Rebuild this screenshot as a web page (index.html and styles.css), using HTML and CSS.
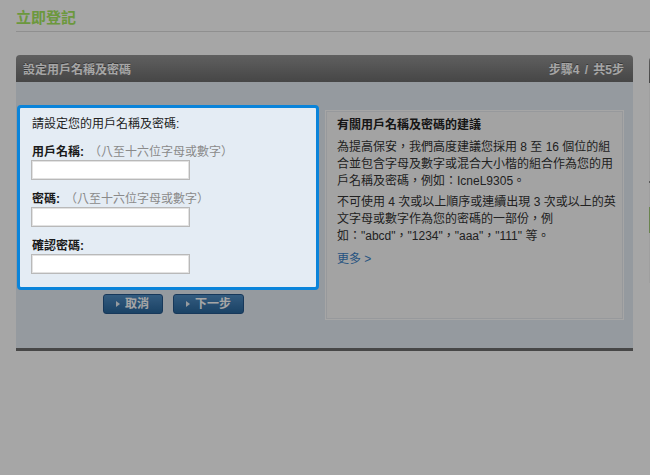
FILE: index.html
```html
<!DOCTYPE html>
<html lang="zh-Hant">
<head>
<meta charset="utf-8">
<title>立即登記</title>
<link rel="stylesheet" href="styles.css">
</head>
<body>
<div class="page">
  <header class="page-head"><h1>立即登記</h1></header>
  <div class="layout">
    <section class="panel">
      <div class="panel-head">
        <span class="panel-title">設定用戶名稱及密碼</span>
        <span class="panel-step">步驟4 / 共5步</span>
      </div>
      <div class="panel-body">
        <div class="form-col">
          <form class="form-box">
            <p class="intro">請設定您的用戶名稱及密碼:</p>
            <label class="field-label">用戶名稱:<span class="hint">（八至十六位字母或數字）</span></label>
            <input class="field" type="text">
            <label class="field-label">密碼:<span class="hint">（八至十六位字母或數字）</span></label>
            <input class="field" type="password">
            <label class="field-label">確認密碼:</label>
            <input class="field" type="password">
          </form>
          <div class="actions">
            <button class="btn btn-cancel" type="button"><span class="arrow"></span>取消</button>
            <button class="btn btn-next" type="button"><span class="arrow"></span>下一步</button>
          </div>
        </div>
        <aside class="tips">
          <h2>有關用戶名稱及密碼的建議</h2>
          <p>為提高保安，我們高度建議您採用 8 至 16 個位的組合並包含字母及數字或混合大小楷的組合作為您的用戶名稱及密碼，例如：IcneL9305。</p>
          <p>不可使用 4 次或以上順序或連續出現 3 次或以上的英文字母或數字作為您的密碼的一部份，例如："abcd"，"1234"，"aaa"，"111" 等。</p>
          <a class="more" href="#">更多 &gt;</a>
        </aside>
      </div>
    </section>
    <aside class="side">
      <div class="side-head"></div>
      <div class="side-body">
        <div class="side-rule"></div>
        <div class="side-green"></div>
      </div>
    </aside>
  </div>
</div>
<div class="overlay"></div>
</body>
</html>
```
FILE: styles.css
```css
html, body {
  margin: 0;
  padding: 0;
  background: #ffffff;
}
body {
  width: 650px;
  height: 475px;
  overflow: hidden;
  font-family: "Liberation Sans", "Noto Sans CJK TC", sans-serif;
  font-size: 12px;
  color: #222;
}
.page {
  box-sizing: border-box;
  width: 650px;
  height: 475px;
  overflow: hidden;
  padding-left: 16px;
}
.page-head {
  padding-top: 8px;
  padding-bottom: 3px;
  border-bottom: 1px solid #dcdcdc;
}
.page-head h1 {
  margin: 0;
  font-size: 15px;
  line-height: 20px;
  font-weight: bold;
  color: #a6ea5e;
}
.layout {
  display: flex;
  gap: 16px;
  margin-top: 23px;
}
.panel {
  width: 617px;
  flex-shrink: 0;
}
.panel-head {
  height: 27px;
  display: flex;
  align-items: center;
  justify-content: space-between;
  padding: 0 9px 0 7px;
  border-radius: 4px 4px 0 0;
  background: linear-gradient(#939393, #6c6c6c);
  color: #ffffff;
  font-weight: bold;
  font-size: 12px;
  text-shadow: 0 -1px 0 #555;
}
.panel-step {
  word-spacing: 2px;
}
.panel-body {
  display: flex;
  align-items: flex-start;
  gap: 6px;
  padding: 23px 9px 28px 1px;
  background: #e5edf5;
  border-bottom: 3px solid #6e6e6e;
}
.form-col {
  width: 302px;
  flex-shrink: 0;
}
.form-box {
  position: relative;
  z-index: 10;
  margin: 0;
  box-sizing: border-box;
  height: 185px;
  padding: 8px 12px 0 12px;
  background: #e4ecf4;
  border: 3px solid #0a84da;
  border-radius: 4px;
  display: flex;
  flex-direction: column;
  align-items: flex-start;
}
.intro {
  margin: 0 0 12px 0;
  line-height: 16px;
  color: #222;
}
.field-label {
  display: block;
  line-height: 16px;
  font-weight: bold;
  color: #1a1a1a;
}
.hint {
  margin-left: 5px;
  font-weight: normal;
  color: #8a8a8a;
}
.field {
  box-sizing: border-box;
  width: 159px;
  height: 20px;
  margin: 0 0 11px -1px;
  padding: 0 3px;
  border: 1px solid #b9b9b9;
  box-shadow: inset 0 0 0 1px #e2e2e2;
  background: #fff;
  font: inherit;
}
.field:last-child {
  margin-bottom: 0;
}
.actions {
  display: flex;
  gap: 10px;
  margin-top: 4px;
  padding-left: 86px;
}
.btn {
  display: flex;
  align-items: center;
  height: 20px;
  box-sizing: border-box;
  padding: 0 13px 0 12px;
  border: 1px solid #24568a;
  border-radius: 3px;
  background: linear-gradient(#4f8dc4, #29669c);
  color: #ffffff;
  font: bold 12px "Liberation Sans", "Noto Sans CJK TC", sans-serif;
  line-height: 18px;
  cursor: pointer;
}
.btn-next {
  padding-right: 12px;
}
.arrow {
  width: 0;
  height: 0;
  border-left: 4px solid #e8eef4;
  border-top: 3px solid transparent;
  border-bottom: 3px solid transparent;
  margin-right: 5px;
}
.tips {
  box-sizing: border-box;
  width: 299px;
  height: 210px;
  margin-top: 5px;
  padding: 6px 6px 0 11px;
  background: #fbfbfb;
  border: 1px solid #ffffff;
  outline: 1px solid #e8ecf0;
  outline-offset: -2px;
  color: #333333;
  line-height: 17px;
}
.tips h2 {
  margin: 0 0 5px 0;
  font-size: 12px;
  line-height: 17px;
  font-weight: bold;
  color: #222222;
}
.tips p {
  margin: 0 0 4px 0;
}
.more {
  display: inline-block;
  margin-top: 2px;
  color: #3a82c6;
  text-decoration: none;
}
.side {
  width: 200px;
  flex-shrink: 0;
}
.side-head {
  height: 26px;
  margin-top: 2px;
  border-radius: 4px 4px 0 0;
  background: linear-gradient(#939393, #6c6c6c);
}
.side-body {
  height: 200px;
  background: #f4f4f4;
  padding-top: 98px;
  box-sizing: border-box;
}
.side-rule {
  height: 2px;
  background: #8a8a8a;
}
.side-green {
  margin-top: 24px;
  height: 26px;
  background: #a3c97a;
}
.overlay {
  position: fixed;
  inset: 0;
  z-index: 5;
  background: rgba(0, 0, 0, 0.35);
}
```
